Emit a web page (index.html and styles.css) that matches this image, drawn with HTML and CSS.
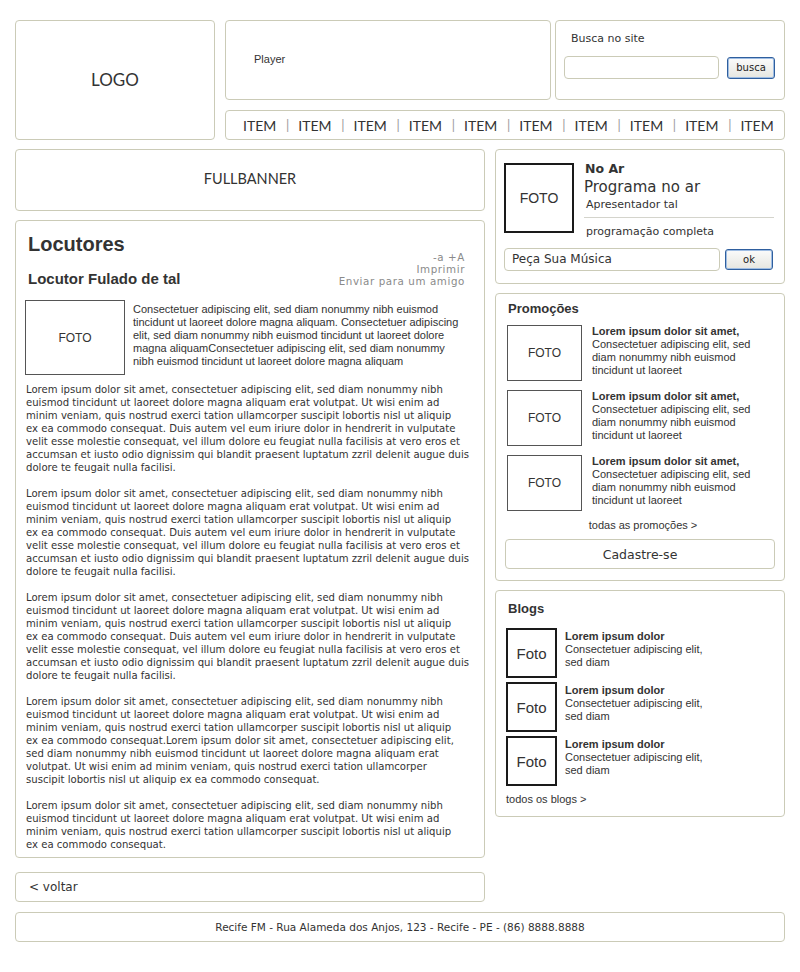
FILE: index.html
```html
<!DOCTYPE html>
<html lang="pt">
<head>
<meta charset="utf-8">
<title>Recife FM - Locutores</title>
<link rel="stylesheet" href="styles.css">
</head>
<body>
<div class="page">
  <header class="top">
    <div class="box logo">LOGO</div>
    <div class="top-right">
      <div class="row1">
        <div class="box player">Player</div>
        <div class="box search">
          <div class="search-label">Busca no site</div>
          <div class="search-row">
            <div class="field search-field"></div>
            <div class="btn btn-busca">busca</div>
          </div>
        </div>
      </div>
      <nav class="box nav">
        <span class="item">ITEM</span><span class="sep">|</span>
        <span class="item">ITEM</span><span class="sep">|</span>
        <span class="item">ITEM</span><span class="sep">|</span>
        <span class="item">ITEM</span><span class="sep">|</span>
        <span class="item">ITEM</span><span class="sep">|</span>
        <span class="item">ITEM</span><span class="sep">|</span>
        <span class="item">ITEM</span><span class="sep">|</span>
        <span class="item">ITEM</span><span class="sep">|</span>
        <span class="item">ITEM</span><span class="sep">|</span>
        <span class="item">ITEM</span>
      </nav>
    </div>
  </header>

  <div class="main">
    <div class="left">
      <div class="box banner">FULLBANNER</div>

      <article class="box article">
        <div class="art-head">
          <div class="titles">
            <h1>Locutores</h1>
            <h2>Locutor Fulado de tal</h2>
          </div>
          <div class="tools">
            <div>-a +A</div>
            <div>Imprimir</div>
            <div>Enviar para um amigo</div>
          </div>
        </div>
        <div class="intro">
          <div class="photo">FOTO</div>
          <p class="intro-text">Consectetuer adipiscing elit, sed diam nonummy nibh euismod<br>tincidunt ut laoreet dolore magna aliquam. Consectetuer adipiscing<br>elit, sed diam nonummy nibh euismod tincidunt ut laoreet dolore<br>magna aliquamConsectetuer adipiscing elit, sed diam nonummy<br>nibh euismod tincidunt ut laoreet dolore magna aliquam</p>
        </div>
        <p class="body">Lorem ipsum dolor sit amet, consectetuer adipiscing elit, sed diam nonummy nibh<br>euismod tincidunt ut laoreet dolore magna aliquam erat volutpat. Ut wisi enim ad<br>minim veniam, quis nostrud exerci tation ullamcorper suscipit lobortis nisl ut aliquip<br>ex ea commodo consequat. Duis autem vel eum iriure dolor in hendrerit in vulputate<br>velit esse molestie consequat, vel illum dolore eu feugiat nulla facilisis at vero eros et<br>accumsan et iusto odio dignissim qui blandit praesent luptatum zzril delenit augue duis<br>dolore te feugait nulla facilisi.</p>
        <p class="body">Lorem ipsum dolor sit amet, consectetuer adipiscing elit, sed diam nonummy nibh<br>euismod tincidunt ut laoreet dolore magna aliquam erat volutpat. Ut wisi enim ad<br>minim veniam, quis nostrud exerci tation ullamcorper suscipit lobortis nisl ut aliquip<br>ex ea commodo consequat. Duis autem vel eum iriure dolor in hendrerit in vulputate<br>velit esse molestie consequat, vel illum dolore eu feugiat nulla facilisis at vero eros et<br>accumsan et iusto odio dignissim qui blandit praesent luptatum zzril delenit augue duis<br>dolore te feugait nulla facilisi.</p>
        <p class="body">Lorem ipsum dolor sit amet, consectetuer adipiscing elit, sed diam nonummy nibh<br>euismod tincidunt ut laoreet dolore magna aliquam erat volutpat. Ut wisi enim ad<br>minim veniam, quis nostrud exerci tation ullamcorper suscipit lobortis nisl ut aliquip<br>ex ea commodo consequat. Duis autem vel eum iriure dolor in hendrerit in vulputate<br>velit esse molestie consequat, vel illum dolore eu feugiat nulla facilisis at vero eros et<br>accumsan et iusto odio dignissim qui blandit praesent luptatum zzril delenit augue duis<br>dolore te feugait nulla facilisi.</p>
        <p class="body">Lorem ipsum dolor sit amet, consectetuer adipiscing elit, sed diam nonummy nibh<br>euismod tincidunt ut laoreet dolore magna aliquam erat volutpat. Ut wisi enim ad<br>minim veniam, quis nostrud exerci tation ullamcorper suscipit lobortis nisl ut aliquip<br>ex ea commodo consequat.Lorem ipsum dolor sit amet, consectetuer adipiscing elit,<br>sed diam nonummy nibh euismod tincidunt ut laoreet dolore magna aliquam erat<br>volutpat. Ut wisi enim ad minim veniam, quis nostrud exerci tation ullamcorper<br>suscipit lobortis nisl ut aliquip ex ea commodo consequat.</p>
        <p class="body">Lorem ipsum dolor sit amet, consectetuer adipiscing elit, sed diam nonummy nibh<br>euismod tincidunt ut laoreet dolore magna aliquam erat volutpat. Ut wisi enim ad<br>minim veniam, quis nostrud exerci tation ullamcorper suscipit lobortis nisl ut aliquip<br>ex ea commodo consequat.</p>
      </article>

      <div class="box back">&lt; voltar</div>
    </div>

    <aside class="right">
      <section class="box noar">
        <div class="noar-top">
          <div class="photo-dark noar-photo">FOTO</div>
          <div class="noar-info">
            <div class="noar-label">No Ar</div>
            <div class="noar-prog">Programa no ar</div>
            <div class="noar-host">Apresentador tal</div>
            <div class="noar-link">programação completa</div>
          </div>
        </div>
        <div class="request-row">
          <div class="field request-field">Peça Sua Música</div>
          <div class="btn btn-ok">ok</div>
        </div>
      </section>

      <section class="box promo">
        <h3>Promoções</h3>
        <div class="promo-item">
          <div class="photo promo-photo">FOTO</div>
          <p><b>Lorem ipsum dolor sit amet,</b><br>Consectetuer adipiscing elit, sed<br>diam nonummy nibh euismod<br>tincidunt ut laoreet</p>
        </div>
        <div class="promo-item">
          <div class="photo promo-photo">FOTO</div>
          <p><b>Lorem ipsum dolor sit amet,</b><br>Consectetuer adipiscing elit, sed<br>diam nonummy nibh euismod<br>tincidunt ut laoreet</p>
        </div>
        <div class="promo-item">
          <div class="photo promo-photo">FOTO</div>
          <p><b>Lorem ipsum dolor sit amet,</b><br>Consectetuer adipiscing elit, sed<br>diam nonummy nibh euismod<br>tincidunt ut laoreet</p>
        </div>
        <div class="promo-all">todas as promoções &gt;</div>
        <div class="signup">Cadastre-se</div>
      </section>

      <section class="box blogs">
        <h3>Blogs</h3>
        <div class="blog-item">
          <div class="photo-dark blog-photo">Foto</div>
          <p><b>Lorem ipsum dolor</b><br>Consectetuer adipiscing elit,<br>sed diam</p>
        </div>
        <div class="blog-item">
          <div class="photo-dark blog-photo">Foto</div>
          <p><b>Lorem ipsum dolor</b><br>Consectetuer adipiscing elit,<br>sed diam</p>
        </div>
        <div class="blog-item">
          <div class="photo-dark blog-photo">Foto</div>
          <p><b>Lorem ipsum dolor</b><br>Consectetuer adipiscing elit,<br>sed diam</p>
        </div>
        <div class="blogs-all">todos os blogs &gt;</div>
      </section>
    </aside>
  </div>

  <footer class="box footer">Recife FM - Rua Alameda dos Anjos, 123 - Recife - PE - (86) 8888.8888</footer>
</div>
</body>
</html>
```

FILE: styles.css
```css
* { box-sizing: border-box; }

html, body {
  margin: 0;
  padding: 0;
  background: #ffffff;
}

body {
  font-family: "DejaVu Sans", Verdana, sans-serif;
  font-size: 11px;
  color: #333333;
}

.page {
  width: 800px;
  padding: 20px 15px 0 15px;
}

p { margin: 0; }
h1, h2, h3 { margin: 0; }

.box {
  border: 1px solid #cbcbb7;
  border-radius: 4px;
  background: #ffffff;
}

/* ---------- header ---------- */
.top {
  display: flex;
  gap: 10px;
}

.logo {
  width: 200px;
  height: 120px;
  flex-shrink: 0;
  display: flex;
  align-items: center;
  justify-content: center;
  font-family: Lato, "Open Sans", sans-serif;
  font-size: 17px;
  color: #333;
  padding-bottom: 2px;
}

.top-right {
  flex: 1;
  min-width: 0;
  display: flex;
  flex-direction: column;
  gap: 10px;
}

.row1 {
  display: flex;
  gap: 4px;
  height: 80px;
}

.player {
  width: 326px;
  flex-shrink: 0;
  font-family: "Liberation Sans", Arial, sans-serif;
  font-size: 11px;
  padding: 32px 0 0 28px;
}

.search {
  flex: 1;
  padding: 11px 9px 0 8px;
}

.search-label {
  font-size: 11px;
  padding-left: 7px;
  line-height: 14px;
}

.search-row {
  display: flex;
  align-items: center;
  justify-content: space-between;
  margin-top: 10px;
}

.field {
  border: 1px solid #cbcbb7;
  border-radius: 4px;
  background: #fff;
}

.search-field {
  width: 155px;
  height: 23px;
}

.btn {
  border: 1px solid #2f5f9e;
  border-radius: 3px;
  background: linear-gradient(#fbfbfb, #e6e6e0);
  box-shadow: inset 0 0 0 1px #9fbde3;
  font-family: "DejaVu Sans", Tahoma, sans-serif;
  font-size: 10px;
  color: #222;
  display: flex;
  align-items: center;
  justify-content: center;
}

.btn-busca {
  width: 48px;
  height: 22px;
}

.nav {
  height: 30px;
  display: flex;
  align-items: center;
  padding-left: 17px;
  font-family: Lato, "Open Sans", sans-serif;
  font-size: 14px;
  color: #333;
  white-space: nowrap;
  overflow: hidden;
}

.item {
  width: 32px;
}

.sep {
  color: #999;
  font-size: 13px;
  margin: 0 9px 0 11px;
}

/* ---------- main ---------- */
.main {
  display: flex;
  gap: 10px;
  margin-top: 9px;
  align-items: flex-start;
}

.left {
  width: 470px;
  flex-shrink: 0;
  display: flex;
  flex-direction: column;
}

.right {
  width: 290px;
  flex-shrink: 0;
  display: flex;
  flex-direction: column;
  gap: 9px;
}

.banner {
  height: 62px;
  display: flex;
  align-items: center;
  justify-content: center;
  font-family: Lato, "Open Sans", sans-serif;
  font-size: 14.5px;
  color: #333;
  padding-bottom: 3px;
}

.article {
  margin-top: 9px;
  padding: 11px 20px 6px 9px;
}

.art-head {
  display: flex;
  justify-content: space-between;
  align-items: flex-end;
}

.titles {
  padding-left: 3px;
  font-family: "Liberation Sans", Arial, sans-serif;
  color: #333;
}

.titles h1 {
  font-size: 20px;
  line-height: 24px;
  font-weight: bold;
}

.titles h2 {
  font-size: 15px;
  line-height: 18px;
  font-weight: bold;
  margin-top: 14px;
}

.tools {
  text-align: right;
  color: #8a8a8a;
  font-size: 10.3px;
  letter-spacing: 0.6px;
  line-height: 12px;
  padding-bottom: 1px;
  margin-right: -1px;
}

.intro {
  display: flex;
  gap: 8px;
  margin-top: 12px;
}

.photo {
  border: 1px solid #555;
  display: flex;
  align-items: center;
  justify-content: center;
  font-family: "Liberation Sans", Arial, sans-serif;
  font-size: 12px;
  color: #333;
  flex-shrink: 0;
}

.intro .photo {
  width: 100px;
  height: 75px;
}

.intro-text {
  font-family: "Liberation Sans", Arial, sans-serif;
  font-size: 11px;
  line-height: 13px;
  padding-top: 3px;
  white-space: nowrap;
}

.body {
  font-size: 10.1px;
  line-height: 13px;
  margin-top: 13px;
  white-space: nowrap;
  padding-left: 1px;
}

.intro + .body {
  margin-top: 8px;
}

.back {
  margin-top: 14px;
  height: 30px;
  display: flex;
  align-items: center;
  padding-left: 13px;
  font-size: 12px;
}

/* ---------- No Ar ---------- */
.noar {
  height: 135px;
  padding: 13px 10px 0 8px;
}

.noar-top {
  display: flex;
  gap: 10px;
}

.photo-dark {
  border: 2px solid #1a1a1a;
  display: flex;
  align-items: center;
  justify-content: center;
  font-family: "Liberation Sans", Arial, sans-serif;
  color: #333;
  flex-shrink: 0;
}

.noar-photo {
  width: 70px;
  height: 70px;
  font-size: 14px;
}

.noar-info {
  flex: 1;
  margin-top: -2px;
}

.noar-label {
  font-weight: bold;
  font-size: 12.5px;
  line-height: 16px;
  padding-left: 1px;
}

.noar-prog {
  font-size: 15px;
  line-height: 20px;
}

.noar-host {
  font-size: 11px;
  line-height: 16px;
  padding-left: 2px;
  padding-bottom: 4px;
  border-bottom: 1px solid #d4d4cc;
}

.noar-link {
  font-size: 11px;
  line-height: 14px;
  padding: 7px 0 0 2px;
}

.request-row {
  display: flex;
  align-items: center;
  justify-content: space-between;
  margin-top: 9px;
}

.request-field {
  width: 216px;
  height: 23px;
  font-size: 12px;
  line-height: 21px;
  padding-left: 7px;
}

.btn-ok {
  width: 48px;
  height: 21px;
  margin-right: 1px;
}

/* ---------- Promoções ---------- */
.promo {
  padding: 7px 9px 11px 11px;
}

.promo h3,
.blogs h3 {
  font-family: "Liberation Sans", Arial, sans-serif;
  font-size: 13px;
  line-height: 16px;
  font-weight: bold;
  color: #333;
}

.promo h3 {
  margin-left: 1px;
}

.promo-item {
  display: flex;
  gap: 10px;
  margin-top: 9px;
}

.promo h3 + .promo-item {
  margin-top: 8px;
}

.promo-photo {
  width: 75px;
  height: 56px;
}

.promo-item p,
.blog-item p {
  font-family: "Liberation Sans", Arial, sans-serif;
  font-size: 11px;
  line-height: 13px;
  color: #333;
  padding-top: 0;
}

.promo-all {
  font-family: "Liberation Sans", Arial, sans-serif;
  font-size: 11px;
  text-align: center;
  margin-top: 7px;
  line-height: 14px;
  padding-left: 4px;
}

.signup {
  margin: 7px 0 0 -2px;
  height: 30px;
  border: 1px solid #cbcbb7;
  border-radius: 4px;
  display: flex;
  align-items: center;
  justify-content: center;
  font-size: 12.5px;
}

/* ---------- Blogs ---------- */
.blogs {
  padding: 10px 9px 10px 10px;
}

.blogs h3 {
  margin-left: 2px;
  margin-bottom: 11px;
}

.blog-item {
  display: flex;
  gap: 8px;
  margin-bottom: 4px;
}

.blog-photo {
  width: 51px;
  height: 50px;
  font-size: 15px;
}

.blog-item p {
  padding-top: 2px;
}

.blogs-all {
  font-family: "Liberation Sans", Arial, sans-serif;
  font-size: 11px;
  line-height: 14px;
  margin-top: 6px;
}

/* ---------- footer ---------- */
.footer {
  margin-top: 10px;
  height: 30px;
  display: flex;
  align-items: center;
  justify-content: center;
  font-size: 10.5px;
}
```
